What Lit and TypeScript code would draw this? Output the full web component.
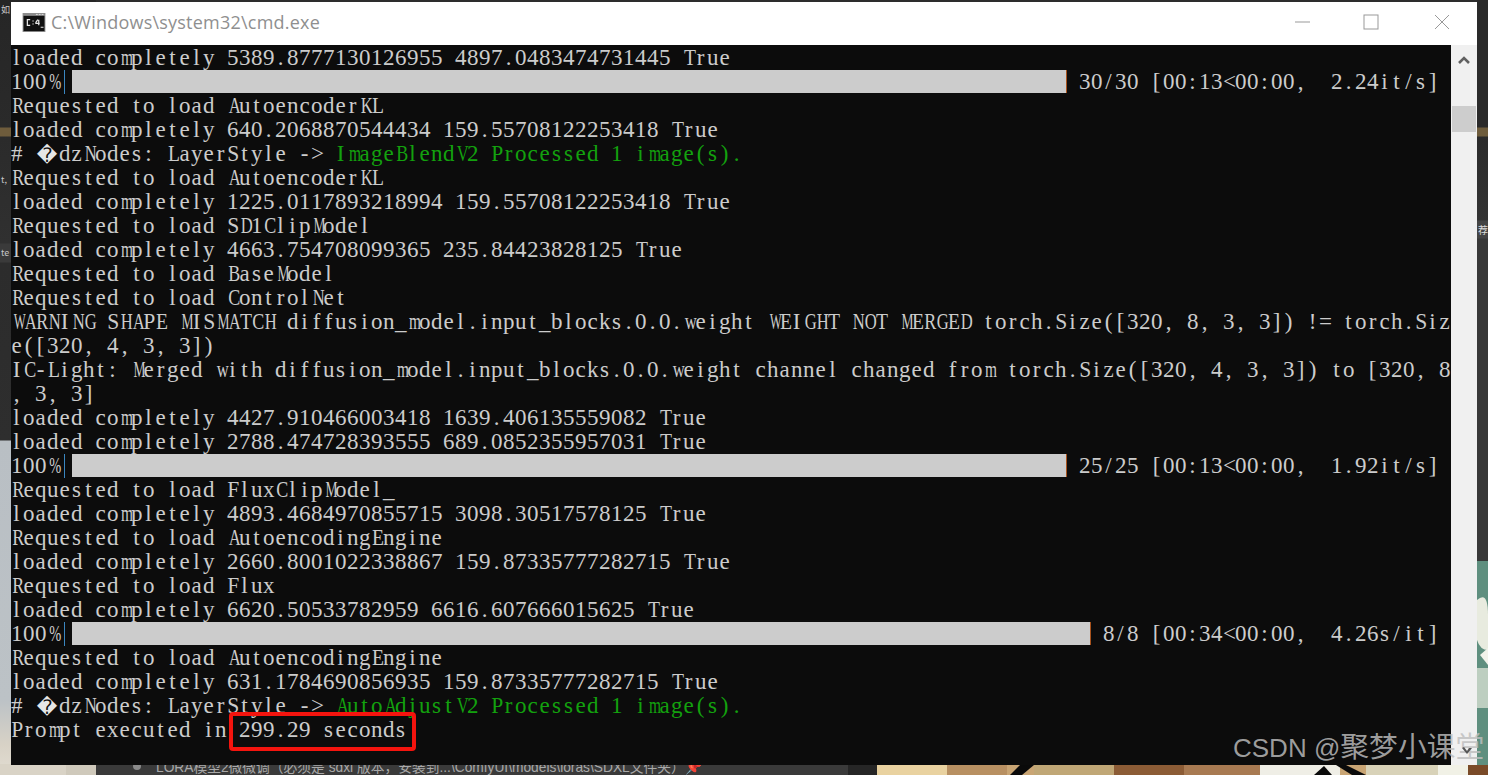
import { LitElement, html, css, svg } from "lit";
import { customElement } from "lit/decorators.js";

const WIDTHS: Record<string, number> = {
  A: 722, B: 667, C: 667, D: 722, E: 611, F: 556, G: 722, H: 722, K: 722, L: 611, M: 889, N: 722, O: 722, P: 556,
  Q: 722, R: 667, S: 556, T: 611, U: 722, V: 722, W: 944, X: 722, Y: 722, Z: 611, m: 778, w: 722, "%": 833,
  "_": 500, "-": 500,
};
const FONT_PX = 23;

function cells(text: string) {
  return [...text].map((ch) => {
    if (ch === "\uFFFD") return html`<span class="c fffd">${ch}</span>`;
    const w = WIDTHS[ch];
    const content = ch === " " ? "\u00A0" : ch;
    if (w && (w * FONT_PX) / 1000 > 12) {
      const s = (12 / ((w * FONT_PX) / 1000)).toFixed(3);
      return html`<span class="c" style="transform:scaleX(${s})">${content}</span>`;
    }
    return html`<span class="c">${content}</span>`;
  });
}

type Row =
  | { t: string; g?: string }
  | { bar: number; tail: string };

const ROWS: Row[] = [
  { t: "loaded completely 5389.8777130126955 4897.0483474731445 True" },
  { bar: 994, tail: " 30/30 [00:13<00:00,  2.24it/s]" },
  { t: "Requested to load AutoencoderKL" },
  { t: "loaded completely 640.2068870544434 159.55708122253418 True" },
  { t: "# \uFFFDdzNodes: LayerStyle -> ", g: "ImageBlendV2 Processed 1 image(s)." },
  { t: "Requested to load AutoencoderKL" },
  { t: "loaded completely 1225.0117893218994 159.55708122253418 True" },
  { t: "Requested to load SD1ClipModel" },
  { t: "loaded completely 4663.754708099365 235.84423828125 True" },
  { t: "Requested to load BaseModel" },
  { t: "Requested to load ControlNet" },
  { t: "WARNING SHAPE MISMATCH diffusion_model.input_blocks.0.0.weight WEIGHT NOT MERGED torch.Size([320, 8, 3, 3]) != torch.Siz" },
  { t: "e([320, 4, 3, 3])" },
  { t: "IC-Light: Merged with diffusion_model.input_blocks.0.0.weight channel changed from torch.Size([320, 4, 3, 3]) to [320, 8" },
  { t: ", 3, 3]" },
  { t: "loaded completely 4427.910466003418 1639.406135559082 True" },
  { t: "loaded completely 2788.474728393555 689.0852355957031 True" },
  { bar: 994, tail: " 25/25 [00:13<00:00,  1.92it/s]" },
  { t: "Requested to load FluxClipModel_" },
  { t: "loaded completely 4893.4684970855715 3098.30517578125 True" },
  { t: "Requested to load AutoencodingEngine" },
  { t: "loaded completely 2660.8001022338867 159.87335777282715 True" },
  { t: "Requested to load Flux" },
  { t: "loaded completely 6620.50533782959 6616.607666015625 True" },
  { bar: 1018, tail: " 8/8 [00:34<00:00,  4.26s/it]" },
  { t: "Requested to load AutoencodingEngine" },
  { t: "loaded completely 631.1784690856935 159.87335777282715 True" },
  { t: "# \uFFFDdzNodes: LayerStyle -> ", g: "AutoAdjustV2 Processed 1 image(s)." },
  { t: "Prompt executed in 299.29 seconds" },
];

@customElement("app-root")
export class AppRoot extends LitElement {
  static styles = css`
    :host { display: block; position: relative; width: 1488px; height: 775px; overflow: hidden; background: #2d2d2d; }
    .left { position: absolute; left: 0; top: 0; width: 96px; height: 775px;
      background: linear-gradient(180deg, #262626 0, #2a2a2a 127px, #6e5c3c 128px, #6e5c3c 136px, #2b2b2b 137px, #303030 243px, #3a3a3a 244px, #3a3a3a 262px, #2c2c2c 263px, #2e2e2e 440px, #b9bfc4 441px, #bcc2c6 700px, #d8d2c6 745px, #e2ddd2 775px); }
    .leftfrag { position: absolute; left: 1px; color: #c8c8c8; font: 9px/11px "Noto Sans CJK SC", "Liberation Sans", sans-serif; }
    .rightdark { position: absolute; left: 1477px; top: 0; width: 11px; height: 561px;
      background: linear-gradient(180deg, #2a2a2a 0, #2a2a2a 127px, #6e5c3c 128px, #6e5c3c 136px, #2b2b2b 137px, #333 220px, #444 221px, #444 238px, #383838 239px, #383838 561px); }
    .rightfrag { position: absolute; left: 1478px; top: 222px; color: #ddd; font: 10px "Noto Sans CJK SC", sans-serif; }
    .art { position: absolute; left: 0; top: 0; width: 1488px; height: 775px; }
    .lesson { position: absolute; left: 133px; top: 756px; display: flex; align-items: center; gap: 15px; color: #a8a8a8; font: 13.76px "Liberation Sans", "Noto Sans CJK SC", sans-serif; white-space: nowrap; }
    .dot { width: 8px; height: 8px; border-radius: 50%; background: #8a8a8a; }
    .lessonbg { position: absolute; left: 96px; top: 760px; width: 752px; height: 15px; background: #3a3a3a; }

    .win { position: absolute; left: 11px; top: 2px; width: 1466px; height: 763px; display: flex; flex-direction: column; background: #fff; }
    .title { height: 43px; flex: none; display: flex; align-items: center; padding: 0 0 3px 11px; box-sizing: border-box; }
    .title svg.logo { flex: none; width: 24px; height: 19px; }
    .name { margin-left: 5px; color: #8f8f8f; font: 18px "Open Sans", "Liberation Sans", sans-serif; letter-spacing: 0.22px; white-space: nowrap; }
    .ctrls { margin-left: auto; display: flex; align-items: center; height: 100%; }
    .ctrl { width: 16px; height: 16px; display: block; }
    .ctrls .min { margin-right: 52px; }
    .ctrls .max { margin-right: 55px; }
    .ctrls .cls { margin-right: 27px; }

    .body { flex: 1; display: flex; min-height: 0; }
    .term { flex: 1; background: #0c0c0c; color: #cccccc; padding-top: 1px; overflow: hidden;
      font: 23px/24px "Liberation Serif", "Noto Sans CJK SC", serif; font-kerning: none; }
    .row { height: 24px; white-space: nowrap; display: flex; }
    .c { display: inline-block; flex: none; width: 12px; height: 24px; box-sizing: border-box; padding-right: 1px; line-height: 24px; text-align: center; transform-origin: center; }
    .c.fffd { width: 24px; padding-right: 0; font: 20px/26px "DejaVu Sans", sans-serif; color: #e6e6e6; }
    .green { color: #13a10e; display: flex; }
    .pipe { flex: none; width: 13px; height: 24px; display: flex; padding-left: 5px; box-sizing: border-box; }
    .pipe i { display: block; width: 1px; height: 24px; background: #3a86c0; }
    .bar { flex: none; height: 23px; background: #cccccc; }
    .end { flex: none; width: 1px; height: 23px; background: #a8521c; }

    .sb { flex: none; width: 26px; background: #f0f0f0; display: flex; flex-direction: column; align-items: center; }
    .sb svg { margin-top: 10px; width: 12px; height: 9px; flex: none; }
    .thumb { margin-top: 42px; width: 24px; height: 26px; background: #cdcdcd; flex: none; }

    .box { position: absolute; left: 229px; top: 712px; width: 179px; height: 31px; border: 4px solid #f4140e; border-radius: 4px; }
    .mark { position: absolute; left: 1233px; top: 728px; color: rgba(190,190,190,0.82); font: 26px/38px "Liberation Sans", "Noto Sans CJK SC", sans-serif; white-space: nowrap; display: flex; align-items: baseline; }
    .mark .cjk { font-size: 28.8px; margin-left: 0; }
    .chev { position: absolute; left: 1460px; top: 745px; width: 14px; height: 12px; }
  `;

  private art() {
    return svg`
      <rect x="0" y="764" width="96" height="11" fill="#d9d3c6"/>
      <rect x="66" y="765" width="30" height="10" fill="#cfc9bb"/>
      <rect x="848" y="765" width="29" height="10" fill="#262626"/>
      <rect x="877" y="765" width="611" height="10" fill="#c9a574"/>
      <rect x="877" y="765" width="70" height="10" fill="#e9d2a0"/>
      <rect x="947" y="765" width="60" height="10" fill="#b89062"/>
      <path d="M1010 775 L1020 765 L1034 765 L1022 775Z" fill="#0a0a0a"/>
      <rect x="1034" y="765" width="80" height="10" fill="#c0a776"/>
      <rect x="1114" y="765" width="70" height="10" fill="#8c5c36"/>
      <rect x="1184" y="765" width="76" height="10" fill="#a87a52"/>
      <rect x="1260" y="765" width="80" height="10" fill="#efeee6"/>
      <path d="M1336 765 L1346 765 L1366 775 L1352 775Z" fill="#0a0a0a"/>
      <path d="M1314 775 L1324 766 L1332 775Z" fill="#0a0a0a"/>
      <rect x="1366" y="765" width="72" height="10" fill="#d8d2b8"/>
      <rect x="1438" y="765" width="30" height="10" fill="#f1f1e6"/>
      <rect x="1468" y="765" width="20" height="10" fill="#7a4a28"/>
      <rect x="1477" y="561" width="11" height="204" fill="#5f8f7f"/>
      <path d="M1477 600 Q1488 590 1488 615 L1488 650 Q1480 650 1477 640Z" fill="#e8ebdf"/>
      <path d="M1480 655 L1488 648 L1488 665Z" fill="#f2f2ea"/>
      <rect x="1477" y="668" width="11" height="40" fill="#e6e8dc" opacity="0.7"/>
    `;
  }

  private row(r: Row) {
    if ("bar" in r) {
      return html`<div class="row">${cells("100%")}<span class="pipe"><i></i></span><span class="bar" style="width:${r.bar}px"></span><span class="end"></span>${cells(r.tail)}</div>`;
    }
    return html`<div class="row">${cells(r.t)}${r.g ? html`<span class="green">${cells(r.g)}</span>` : ""}</div>`;
  }

  render() {
    return html`
      <div class="left"></div>
      <div class="leftfrag" style="top:4px">如</div>
      <div class="leftfrag" style="top:174px">t,</div>
      <div class="leftfrag" style="top:247px">te</div>
      <div class="rightdark"></div>
      <div class="rightfrag">荐</div>
      <svg class="art" viewBox="0 0 1488 775">${this.art()}</svg>
      <div class="lessonbg"></div>
      <div class="lesson"><span class="dot"></span><span>LORA模型2微微调（必须是 sdxl 版本，安装到...\\ComfyUI\\models\\loras\\SDXL文件夹）📌</span></div>

      <div class="win">
        <div class="title">
          <svg class="logo" viewBox="0 0 24 20">
            <rect x="0" y="0" width="24" height="20" fill="#8d8d8d"/>
            <rect x="1" y="3" width="22" height="16" fill="#111"/>
            <rect x="14" y="1" width="2" height="1" fill="#ddd"/><rect x="17" y="1" width="2" height="1" fill="#ddd"/><rect x="20" y="1" width="2" height="1" fill="#ddd"/>
            <path d="M8 7H5V13H8M11 8V9M11 11V12M16 7L14 10V11H18M17 7V13M19 15H22" fill="none" stroke="#e8e8e8" stroke-width="1.3"/>
          </svg>
          <span class="name">C:\\Windows\\system32\\cmd.exe</span>
          <div class="ctrls">
            <svg class="ctrl min" viewBox="0 0 16 16"><path d="M0 8H15" stroke="#999" stroke-width="1" fill="none"/></svg>
            <svg class="ctrl max" viewBox="0 0 16 16"><rect x="1" y="1" width="14" height="14" stroke="#999" stroke-width="1" fill="none"/></svg>
            <svg class="ctrl cls" viewBox="0 0 16 16"><path d="M1 1L15 15M15 1L1 15" stroke="#999" stroke-width="1" fill="none"/></svg>
          </div>
        </div>
        <div class="body">
          <div class="term">${ROWS.map((r) => this.row(r))}</div>
          <div class="sb">
            <svg viewBox="0 0 12 9"><path d="M1 8L6 3L11 8" stroke="#606060" stroke-width="2.6" fill="none"/></svg>
            <div class="thumb"></div>
          </div>
        </div>
      </div>

      <div class="box"></div>
      <div class="mark"><span>CSDN @</span><span class="cjk">聚梦小课堂</span></div>
      <svg class="chev" viewBox="0 0 14 12"><path d="M2 3L7 9L12 3L9 3L7 6L4 2Z" fill="#555"/></svg>
    `;
  }
}
